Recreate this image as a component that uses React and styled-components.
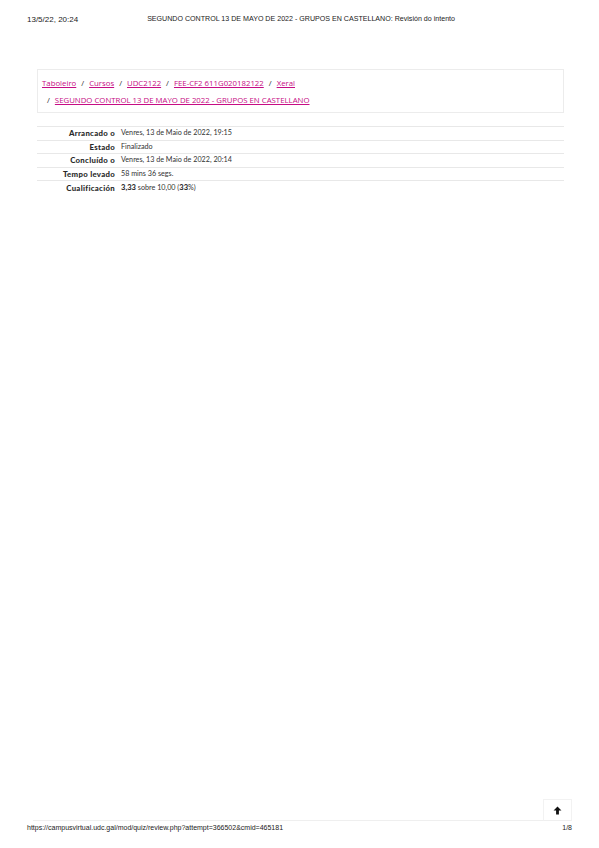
import styled, { createGlobalStyle } from 'styled-components';

const Global = createGlobalStyle`
  html, body { margin: 0; padding: 0; background: #fff; }
  body { width: 599px; height: 848px; overflow: hidden; }
`

const Page = styled.div`
  width: 599px;
  height: 848px;
  display: flex;
  flex-direction: column;
  font-family: "Open Sans", "Noto Sans", sans-serif;
`

const PrintHeader = styled.div`
  height: 38px;
  padding: 0 27px;
  display: flex;
  align-items: center;
  font-family: "Liberation Sans", Arial, sans-serif;
  font-size: 8px;
  color: #222;
`

const HeaderTitle = styled.div`
  flex: 1;
  text-align: center;
  font-size: 7.1px;
  padding-right: 48px;
`

const Content = styled.main`
  flex: 1;
  padding: 31px 35px 0 37px;
  display: flex;
  flex-direction: column;
`

const Breadcrumb = styled.nav`
  border: 1px solid #ececec;
  padding: 5px 4px 3px 4px;
  font-size: 7.8px;
  line-height: 17px;
  color: #333;
`

const Crumb = styled.a`
  color: #c60c84;
  text-decoration: underline;
`

const Sep = styled.span`
  margin: 0 5px;
  color: #333;
`

const LineTwo = styled.div`
  padding-left: 0;
`

const Summary = styled.table`
  margin-top: 13px;
  width: 100%;
  border-collapse: collapse;
  font-family: Lato, "Open Sans", sans-serif;
  font-size: 7.2px;
  color: #333;
`

const Row = styled.tr`
  border-top: ${p => (p.$last ? '1.5px' : '1px')} solid #e8e8e8;
  height: 13.5px;
  line-height: 12px;
`

const Label = styled.th`
  width: 78px;
  text-align: right;
  font-weight: 900;
  font-size: 7.8px;
  letter-spacing: 0.3px;
  color: #2a2a2a;
  padding: 0 6px 0 0;
  white-space: nowrap;
`

const Value = styled.td`
  padding: 0;
  white-space: nowrap;
  & b { font-size: 7.6px; font-weight: 900; }
`

const Spacer = styled.div`
  flex: 1;
`

const BottomBar = styled.div`
  display: flex;
  align-items: flex-end;
  padding: 0 27px 0 33px;
`

const Rule = styled.div`
  flex: 1;
  border-bottom: 1px solid #efefef;
`

const TopButton = styled.div`
  width: 27px;
  height: 20px;
  border: 1px solid #f2f2f2;
  border-bottom-color: #efefef;
  display: flex;
  align-items: center;
  justify-content: center;
`

const PrintFooter = styled.div`
  height: 27px;
  padding: 3px 27px 0;
  box-sizing: border-box;
  display: flex;
  justify-content: space-between;
  align-items: flex-start;
  font-family: "Liberation Sans", Arial, sans-serif;
  font-size: 7px;
  color: #222;
`

const rows = [
  ['Arrancado o', 'Venres, 13 de Maio de 2022, 19:15'],
  ['Estado', 'Finalizado'],
  ['Concluído o', 'Venres, 13 de Maio de 2022, 20:14'],
  ['Tempo levado', '58 mins 36 segs.'],
]

export default function App() {
  return (
    <Page>
      <Global />
      <PrintHeader>
        <span>13/5/22, 20:24</span>
        <HeaderTitle>SEGUNDO CONTROL 13 DE MAYO DE 2022 - GRUPOS EN CASTELLANO: Revisión do intento</HeaderTitle>
      </PrintHeader>
      <Content>
        <Breadcrumb>
          <div>
            <Crumb>Taboleiro</Crumb><Sep>/</Sep>
            <Crumb>Cursos</Crumb><Sep>/</Sep>
            <Crumb>UDC2122</Crumb><Sep>/</Sep>
            <Crumb>FEE-CF2 611G020182122</Crumb><Sep>/</Sep>
            <Crumb>Xeral</Crumb>
          </div>
          <LineTwo>
            <Sep>/</Sep>
            <Crumb>SEGUNDO CONTROL 13 DE MAYO DE 2022 - GRUPOS EN CASTELLANO</Crumb>
          </LineTwo>
        </Breadcrumb>
        <Summary>
          <tbody>
            {rows.map(([k, v]) => (
              <Row key={k}>
                <Label>{k}</Label>
                <Value>{v}</Value>
              </Row>
            ))}
            <Row $last>
              <Label>Cualificación</Label>
              <Value><b>3,33</b> sobre 10,00 (<b>33</b>%)</Value>
            </Row>
          </tbody>
        </Summary>
        <Spacer />
      </Content>
      <BottomBar>
        <Rule />
        <TopButton>
          <svg width="9" height="9" viewBox="0 0 16 16">
            <path d="M8 1 L15 8 L10.5 8 L10.5 15 L5.5 15 L5.5 8 L1 8 Z" fill="#111" />
          </svg>
        </TopButton>
      </BottomBar>
      <PrintFooter>
        <span>https://campusvirtual.udc.gal/mod/quiz/review.php?attempt=366502&amp;cmid=465181</span>
        <span>1/8</span>
      </PrintFooter>
    </Page>
  )
}
